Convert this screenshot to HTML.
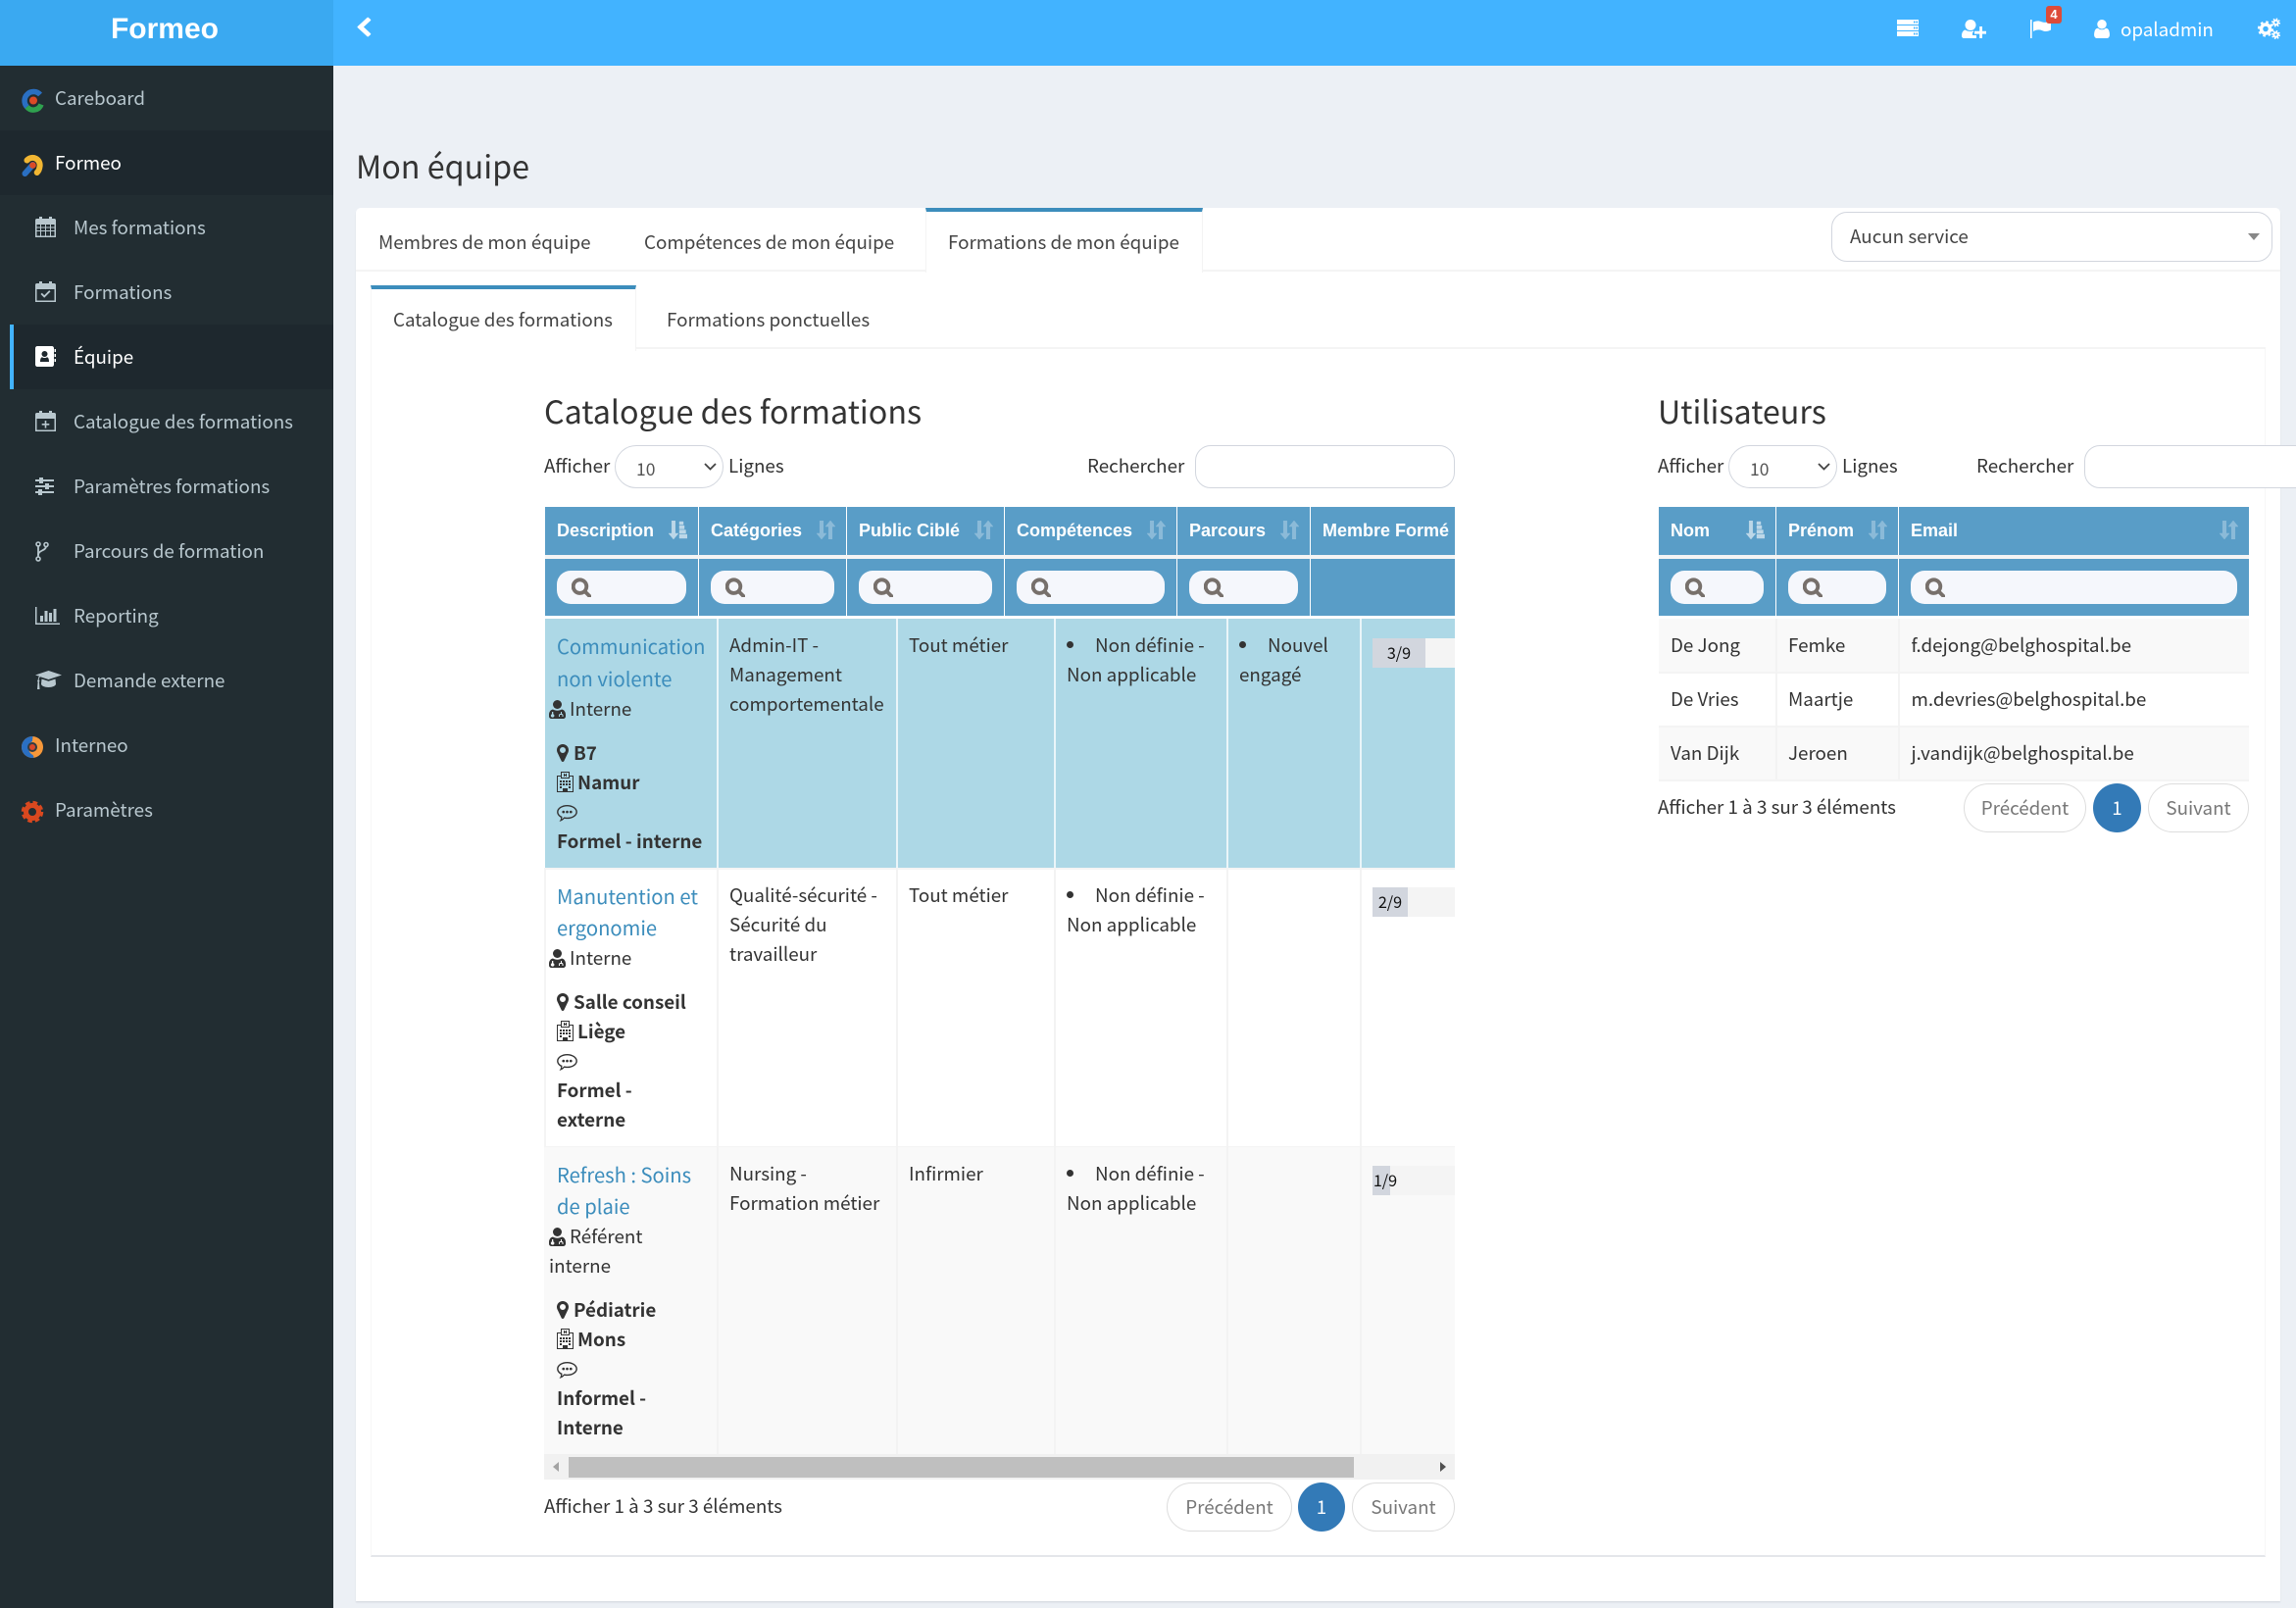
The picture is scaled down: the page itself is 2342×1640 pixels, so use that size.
<!DOCTYPE html>
<html lang="fr"><head><meta charset="utf-8"><title>Mon équipe - Formeo</title>
<style>
*{box-sizing:border-box}
html,body{margin:0;padding:0}
body{width:2342px;height:1640px;overflow:hidden;position:relative;background:#ecf0f5;font-family:"Noto Sans CJK JP","Liberation Sans",sans-serif;font-size:18.8px;color:#333}
.a,.t,svg.i{position:absolute}
.t{white-space:nowrap;line-height:30px;height:30px}
.b{font-weight:700}
.s{color:#b8c7ce}
.w{color:#fff}
.l{color:#3c8dbc;font-size:20.2px}
.h{font-family:"Liberation Sans",Arial,sans-serif;font-weight:700;font-size:18px;color:#fff}
.ttl{font-size:32.3px;line-height:50px;height:50px}
.th{position:absolute;background:#599dc7}
.in{position:absolute;height:34px;top:582px;background:#f5f7fc;border-radius:14px}
.bx{position:absolute;background:#fff;border:1.5px solid #d2d6de;border-radius:16px}
.pg{position:absolute;border:1.5px solid #ddd;border-radius:25px;background:#fff;color:#777;text-align:center;line-height:47px;height:50px}
.pc{position:absolute;background:#337ab7;color:#fff;border-radius:50%;text-align:center;height:50px;line-height:50px}
.vl{position:absolute;width:1.5px}
svg.i{fill:currentColor;overflow:visible}
.g{color:#77706b;stroke:currentColor;stroke-width:70}
.so{color:#fff;opacity:.3;stroke:currentColor;stroke-width:.5}
.so1{color:#fff;opacity:.6;stroke:currentColor;stroke-width:.4}
.pb{position:absolute;left:1400px;width:84px;height:30px;background:#f4f4f4}
.pf{position:absolute;left:0;top:0;height:30px;background:#d2d6de}
.pt{position:absolute;left:0;top:-1px;width:54px;text-align:center;font-size:16.2px;line-height:30px;color:#111}
</style></head><body>
<svg width="0" height="0" style="position:absolute">
<symbol id="search" viewBox="60 60 1670 1690"><path d="M1216 832q0-185-131.5-316.5t-316.5-131.5-316.5 131.5-131.5 316.5 131.5 316.5 316.5 131.5 316.5-131.5 131.5-316.5zm512 832q0 52-38 90t-90 38q-54 0-90-38l-343-342q-179 124-399 124-143 0-273.5-55.5t-225-150-150-225-55.5-273.5 55.5-273.5 150-225 225-150 273.5-55.5 273.5 55.5 225 150 150 225 55.5 273.5q0 220-124 399l343 343q37 37 37 90z"/></symbol>
<symbol id="marker" viewBox="384 128 1024 1536"><path d="M1152 640q0-106-75-181t-181-75-181 75-75 181 75 181 181 75 181-75 75-181zm256 0q0 109-33 179l-364 774q-16 33-47.5 52t-67.5 19-67.5-19-46.5-52l-365-774q-33-70-33-179 0-212 150-362t362-150 362 150 150 362z"/></symbol>
<symbol id="user" viewBox="256 128 1280 1536"><path d="M1536 1399q0 109-62.5 187t-150.5 78h-854q-88 0-150.5-78t-62.5-187q0-85 8.5-160.5t31.5-152 58.5-131 94-89 134.5-34.5q131 128 313 128t313-128q76 0 134.5 34.5t94 89 58.5 131 31.5 152 8.5 160.5zm-256-887q0 159-112.5 271.5t-271.5 112.5-271.5-112.5-112.5-271.5 112.5-271.5 271.5-112.5 271.5 112.5 112.5 271.5z"/></symbol>
<symbol id="hosp" viewBox="0 0 17 21"><path fill-rule="evenodd" d="M4 0h9v4h4v17H0V4h4zM5 1v5h7V1zM7 2v3h1V4h1v1h1V2H9v1H8V2zM1 5v15h5v-3h5v3h5V5h-3v2H4V5zM3 9h2v2H3zm3 0h2v2H6zm3 0h2v2H9zm3 0h2v2h-2zM3 12h2v2H3zm3 0h2v2H6zm3 0h2v2H9zm3 0h2v2h-2zM3 15h2v2H3zm9 0h2v2h-2z"/></symbol>
<symbol id="chat" viewBox="0 0 22 18"><path fill-rule="evenodd" d="M11 0c6 0 11 3.300 11 7.500S17 15 11 15c-1 0-2-.1-3-.3C6.500 16.500 4.500 17.500 2.500 18c1-1.200 1.700-2.600 1.800-4.400C1.700 12.300 0 10 0 7.500 0 3.300 5 0 11 0zm0 1.500c-5.200 0-9.500 2.700-9.500 6 0 2.100 1.600 4 4.300 5.100-.1 1-.3 1.800-.7 2.600 1.100-.6 2-1.300 2.700-2.100 1 .3 2.100.4 3.200.4 5.200 0 9.500-2.700 9.500-6s-4.300-6-9.500-6z"/><circle cx="7" cy="7.500" r="1.400"/><circle cx="11" cy="7.500" r="1.400"/><circle cx="15" cy="7.500" r="1.400"/></symbol>
<symbol id="md" viewBox="0 0 17 19"><circle cx="8.500" cy="4.500" r="4.500"/><path fill-rule="evenodd" d="M4 9.500c1.200.8 2.900 1.200 4.500 1.200s3.300-.4 4.500-1.200c2.500.5 4 2.500 4 5.500v1.500c0 1.400-1 2.500-2.500 2.500h-12C1 19 0 17.900 0 16.500V15c0-3 1.500-5 4-5.500zM3 12v2.200a1.800 1.800 0 1 0 1.300 0V12zm9 0v2h-.7c-.7 0-1.300.8-1.300 1.800V17h1v-1.200c0-.4.200-.8.500-.8h1.500c.3 0 .5.400.5.800V17h1v-1.200c0-1-.6-1.800-1.300-1.800H13v-2z"/></symbol>
<symbol id="sortu" viewBox="0 0 19 19"><path d="M0 13h3.200V0h3.600v13H10l-5 6zM9 6l5-6 5 6h-3.200v13h-3.600V6z"/></symbol>
<symbol id="sorta" viewBox="0 0 19 19"><path d="M0 13h3.200V0h3.600v13H10l-5 6zM11 1h4v3h-4zm0 4h5v3.500h-5zm0 4.500h6.500V13H11zm0 4.500h8v4h-8z"/></symbol>
</svg>

<!-- sidebar -->
<div class="a" style="left:0;top:0;width:340px;height:1640px;background:#222d32"></div>
<div class="a" style="left:0;top:0;width:340px;height:67px;background:#3aa9f1"></div>
<div class="a" style="left:340px;top:0;width:2002px;height:67px;background:#42b3ff"></div>
<div class="t w" style="left:0;width:336px;text-align:center;top:12px;font:700 30px/36px 'Liberation Sans',Arial,sans-serif;height:36px">Formeo</div>
<div class="a" style="left:0;top:133px;width:340px;height:66px;background:#1e282e"></div>
<div class="a" style="left:10px;top:331px;width:330px;height:66px;background:#1e282e"></div>
<div class="a" style="left:10px;top:331px;width:4px;height:66px;background:#42b3ff"></div>

<div class="t s" style="left:56px;top:85px">Careboard</div>
<div class="t w" style="left:56px;top:151px">Formeo</div>
<div class="t s" style="left:75px;top:217px">Mes formations</div>
<div class="t s" style="left:75px;top:283px">Formations</div>
<div class="t w" style="left:75px;top:349px">Équipe</div>
<div class="t s" style="left:75px;top:415px">Catalogue des formations</div>
<div class="t s" style="left:75px;top:481px">Paramètres formations</div>
<div class="t s" style="left:75px;top:547px">Parcours de formation</div>
<div class="t s" style="left:75px;top:613px">Reporting</div>
<div class="t s" style="left:75px;top:679px">Demande externe</div>
<div class="t s" style="left:56px;top:745px">Interneo</div>
<div class="t s" style="left:56px;top:811px">Paramètres</div>

<!-- Colored logos -->
<svg class="i" style="left:22px;top:91px" width="23" height="23" viewBox="0 0 23 23"><path d="M19 5.500A8.500 8.500 0 1 0 5.500 18" fill="none" stroke="#2a6fc2" stroke-width="5.500"/><path d="M5.500 18A8.500 8.500 0 0 0 20 15.500" fill="none" stroke="#2fa14f" stroke-width="5.500"/><circle cx="12" cy="11.500" r="4" fill="#dc4a26"/></svg>
<svg class="i" style="left:22px;top:157px" width="23" height="23" viewBox="0 0 23 23"><path d="M5.500 6.500A7.500 7.500 0 0 1 18.500 13c-.3 2.500-1.200 4.500-2.800 6" fill="none" stroke="#f2b632" stroke-width="6" stroke-linecap="round"/><path d="M3.500 20L11.500 11" stroke="#2a6fc2" stroke-width="6" stroke-linecap="round"/><circle cx="11.500" cy="11.500" r="3.300" fill="#dc4a26"/></svg>
<svg class="i" style="left:22px;top:751px" width="22" height="22" viewBox="0 0 22 22"><circle cx="11" cy="11" r="11" fill="#f7983a"/><path d="M11 0a11 11 0 0 0 0 22c1.500 0 2-1 .5-3A8 8 0 0 1 11 5c0-2.500 1-5 0-5z" fill="#2a6fc2"/><circle cx="11" cy="11" r="5" fill="#333c42"/><circle cx="11" cy="11" r="3" fill="#d9482a"/></svg>
<svg class="i" style="left:22px;top:817px" width="22" height="22" viewBox="0 0 22 22"><circle cx="11" cy="11" r="6.500" fill="none" stroke="#d9481f" stroke-width="5"/><circle cx="11" cy="11" r="9.500" fill="none" stroke="#d9481f" stroke-width="3.500" stroke-dasharray="4.500 3"/></svg>

<!-- submenu icons -->
<svg class="i s" style="left:36px;top:221px" width="21" height="21" viewBox="0 0 21 21"><path fill-rule="evenodd" d="M1.500 2H4V0h3v2h7V0h3v2h2.500C20.300 2 21 2.700 21 3.500V21H0V3.500C0 2.700.7 2 1.500 2zM1.500 8v2.500h3.500V8zm4.500 0v2.500h4V8zm5 0v2.500h4V8zm5 0v2.500h3.500V8zM1.500 11.500V14h3.500v-2.500zm4.500 0V14h4v-2.500zm5 0V14h4v-2.500zm5 0V14h3.500v-2.500zM1.500 15v4.500h3.500V15zm4.500 0v4.500h4V15zm5 0v4.500h4V15zm5 0v4.500h3.500V15z"/></svg>
<svg class="i s" style="left:36px;top:287px" width="21" height="21" viewBox="0 0 21 21"><path fill-rule="evenodd" d="M1.500 2H4V0h3v2h7V0h3v2h2.500C20.300 2 21 2.700 21 3.500V21H0V3.500C0 2.700.7 2 1.500 2zm0 6v11.500h18V8z"/><path d="M5.500 13l1.300-1.300 2.400 2.400 5-5 1.300 1.300-6.300 6.300z"/></svg>
<svg class="i w" style="left:36px;top:353px" width="21" height="21" viewBox="0 0 21 21"><path fill-rule="evenodd" d="M2 0h15c1 0 2 1 2 2v17c0 1-1 2-2 2H2c-1 0-2-1-2-2V2C0 1 1 0 2 0zm7.500 5a3 3 0 1 0 0 6 3 3 0 0 0 0-6zM5 16h9c0-2.500-.5-4.500-2-4.800-.7.500-1.600.8-2.500.8S7.700 11.700 7 11.200c-1.500.3-2 2.300-2 4.800z"/><path d="M19.500 3H21v3h-1.500zm0 5H21v3h-1.500zm0 5H21v3h-1.500z"/></svg>
<svg class="i s" style="left:36px;top:419px" width="21" height="21" viewBox="0 0 21 21"><path fill-rule="evenodd" d="M1.500 2H4V0h3v2h7V0h3v2h2.500C20.300 2 21 2.700 21 3.500V21H0V3.500C0 2.700.7 2 1.500 2zm0 6v11.500h18V8z"/><path d="M9.700 10h1.600v3h3v1.600h-3v3H9.700v-3h-3V13h3z"/></svg>
<svg class="i s" style="left:36px;top:487px" width="19" height="18" viewBox="0 0 19 18"><path d="M0 2h4V0h4v2h11v2H8v2H4V4H0zM0 8h10V6h4v2h5v2h-5v2h-4v-2H0zM0 14h3v-2h4v2h12v2H7v2H3v-2H0z"/></svg>
<svg class="i s" style="left:36px;top:552px" width="14" height="21" viewBox="0 0 14 21"><path fill="none" stroke="currentColor" stroke-width="1.800" d="M3 4v12"/><path fill="none" stroke="currentColor" stroke-width="1.800" d="M11 5c0 5-8 4-8 9"/><g fill="none" stroke="currentColor" stroke-width="1.600"><circle cx="3" cy="3" r="2"/><circle cx="3" cy="18" r="2"/><circle cx="11" cy="3.500" r="2"/></g></svg>
<svg class="i s" style="left:36px;top:619px" width="25" height="18" viewBox="0 0 25 18"><path d="M0 0h1.500v16.500H25V18H0zM5 9h3v6H5zm4.500-5h3v11h-3zM14 6h3v9h-3zm4.500-4h3v13h-3z"/></svg>
<svg class="i s" style="left:36px;top:684px" width="27" height="20" viewBox="0 0 27 20"><path d="M13.500 0L27 4.500l-13.500 4.500L5 6.300C4 7 3.700 8 3.700 9.500c.5.200.7.600.7 1 0 .4-.2.700-.5.900L4.500 19H2l.6-7.600c-.3-.2-.5-.5-.5-.9s.3-.8.700-1c0-1.500.3-3 1.300-3.800L0 4.500z"/><path d="M6.500 8.500l7 2.300 7-2.300.5 5c0 2-3.500 3.500-7.500 3.500S6 15.500 6 13.500z"/></svg>

<!-- topbar -->
<svg class="i w" style="left:363px;top:18px" width="16" height="20" viewBox="300 60 1200 1620" preserveAspectRatio="none"><path d="M1427 301l-531 531 531 531q19 19 19 45t-19 45l-166 166q-19 19-45 19t-45-19l-742-742q-19-19-19-45t19-45l742-742q19-19 45-19t45 19l166 166q19 19 19 45t-19 45z"/></svg>
<svg class="i w" style="left:1935px;top:20px" width="22" height="17" viewBox="0 0 22 17"><path fill-rule="evenodd" d="M0 0h22v5H0zm17 1.500v2h1.500v-2zm2.500 0v2H21v-2zM0 6h22v5H0zm17 1.500v2h1.500v-2zm2.500 0v2H21v-2zM0 12h22v5H0zm17 1.500v2h1.500v-2zm2.500 0v2H21v-2z"/></svg>
<svg class="i w" style="left:2001px;top:20px" width="25" height="19" viewBox="0 0 25 19"><circle cx="9" cy="5.500" r="5.500"/><path d="M3.500 10.500C5 11.500 7 12 9 12c1 0 2-.1 3-.4V13h-1v3h4v3H2.500C1 19 0 18 0 16.500c0-3 1.200-5.500 3.500-6z"/><path d="M18.200 7h2.800v4.800h4v2.800h-4V19h-2.800v-4.400H13v-2.800h5.200z"/></svg>
<svg class="i w" style="left:2071px;top:20px" width="21" height="19" viewBox="0 0 21 19"><path d="M0 0h1.600v19H0z"/><path d="M3 2.500c2.500-1 4.500-1.300 6-1 2.500.6 4.500 1.800 7 1.200l5-1.500v9.300c-2 1-4 1.700-6 1.500-2.500-.3-3.500-1.400-6-1.600-2-.1-4 .5-6 1.600z"/></svg>
<div class="a" style="left:2087px;top:6px;width:16px;height:18px;background:#dd4b39;border-radius:3px;color:#fff;font:700 13px/18px 'Liberation Sans',sans-serif;text-align:center">4</div>
<svg class="i w" style="left:2136px;top:20px" width="16" height="19"><use href="#user"/></svg>
<div class="t w" style="left:2163px;top:15px">opaladmin</div>
<svg class="i w" style="left:2303px;top:19px" width="23" height="21" viewBox="0 0 23 21"><circle cx="8" cy="10.500" r="4.500" fill="none" stroke="currentColor" stroke-width="3.500"/><circle cx="8" cy="10.500" r="7" fill="none" stroke="currentColor" stroke-width="2.200" stroke-dasharray="2.600 2.900"/><circle cx="18.500" cy="4" r="2.200" fill="none" stroke="currentColor" stroke-width="2"/><circle cx="18.500" cy="4" r="3.800" fill="none" stroke="currentColor" stroke-width="1.500" stroke-dasharray="1.500 1.500"/><circle cx="18.500" cy="16.500" r="2.200" fill="none" stroke="currentColor" stroke-width="2"/><circle cx="18.500" cy="16.500" r="3.800" fill="none" stroke="currentColor" stroke-width="1.500" stroke-dasharray="1.500 1.500"/></svg>

<div class="t ttl" style="left:363px;top:144px;color:#333">Mon équipe</div>

<!-- card -->
<div class="a" style="left:363px;top:212px;width:1963px;height:1421px;background:#fff;border-radius:5px 5px 0 0;box-shadow:0 1.500px 1.500px #d8dce3"></div>
<div class="a" style="left:363px;top:275px;width:1963px;height:1.500px;background:#f4f4f4"></div>
<div class="a" style="left:944px;top:212px;width:283px;height:66px;background:#fff;border-right:1.500px solid #f4f4f4;border-left:1.500px solid #f4f4f4;border-top:4px solid #3c8dbc"></div>
<div class="t" style="left:386px;top:232px;color:#444">Membres de mon équipe</div>
<div class="t" style="left:657px;top:232px;color:#444">Compétences de mon équipe</div>
<div class="t" style="left:967px;top:232px;color:#444">Formations de mon équipe</div>
<div class="bx" style="left:1868px;top:216px;width:450px;height:51px"></div>
<div class="t" style="left:1887px;top:226px;color:#444">Aucun service</div>
<div class="a" style="left:2293px;top:238px;width:0;height:0;border-left:6px solid transparent;border-right:6px solid transparent;border-top:7px solid #888"></div>

<!-- inner panel -->
<div class="a" style="left:378px;top:354px;width:1933px;height:1234px;background:#fff;border-left:1px solid #f7f7f7;border-right:1px solid #f7f7f7;border-bottom:2px solid #e4e6ea"></div>
<div class="a" style="left:378px;top:354px;width:1933px;height:1.500px;background:#f4f4f4"></div>
<div class="a" style="left:378px;top:291px;width:271px;height:67px;background:#fff;border-right:1.500px solid #f4f4f4;border-left:1px solid #f7f7f7;border-top:4px solid #3c8dbc"></div>
<div class="t" style="left:401px;top:311px;color:#444">Catalogue des formations</div>
<div class="t" style="left:680px;top:311px;color:#444">Formations ponctuelles</div>

<!-- Catalogue table -->
<div class="t ttl" style="left:555px;top:394px">Catalogue des formations</div>
<div class="t" style="left:555px;top:460px">Afficher</div>
<div class="bx" style="left:627px;top:454px;width:111px;height:44px;border-radius:22px"></div>
<div class="t" style="left:649px;top:464px;font-size:17.5px;color:#555">10</div>
<svg class="i" style="left:718px;top:472px" width="13" height="8" viewBox="0 0 13 8"><path d="M1 1l5.500 5.500L12 1" fill="none" stroke="#444" stroke-width="1.800"/></svg>
<div class="t" style="left:743px;top:460px">Lignes</div>
<div class="t" style="left:1109px;top:460px">Rechercher</div>
<div class="bx" style="left:1219px;top:454px;width:265px;height:44px"></div>

<div class="a" style="left:556px;top:566px;width:928px;height:4px;background:#f4f4f4"></div>
<div class="th" style="left:556px;top:517px;width:156px;height:49px"></div>
<div class="th" style="left:713px;top:517px;width:150px;height:49px"></div>
<div class="th" style="left:864px;top:517px;width:160px;height:49px"></div>
<div class="th" style="left:1025px;top:517px;width:175px;height:49px"></div>
<div class="th" style="left:1201px;top:517px;width:135px;height:49px"></div>
<div class="th" style="left:1337px;top:517px;width:147px;height:49px"></div>
<div class="th" style="left:556px;top:570px;width:156px;height:58px"></div>
<div class="th" style="left:713px;top:570px;width:150px;height:58px"></div>
<div class="th" style="left:864px;top:570px;width:160px;height:58px"></div>
<div class="th" style="left:1025px;top:570px;width:175px;height:58px"></div>
<div class="th" style="left:1201px;top:570px;width:135px;height:58px"></div>
<div class="th" style="left:1337px;top:570px;width:147px;height:58px"></div>

<div class="t h" style="left:568px;top:526px">Description</div>
<div class="t h" style="left:725px;top:526px">Catégories</div>
<div class="t h" style="left:876px;top:526px">Public Ciblé</div>
<div class="t h" style="left:1037px;top:526px">Compétences</div>
<div class="t h" style="left:1213px;top:526px">Parcours</div>
<div class="t h" style="left:1349px;top:526px">Membre Formé</div>
<svg class="i so1" style="left:682px;top:531px" width="19" height="19"><use href="#sorta"/></svg>
<svg class="i so" style="left:833px;top:531px" width="19" height="19"><use href="#sortu"/></svg>
<svg class="i so" style="left:994px;top:531px" width="19" height="19"><use href="#sortu"/></svg>
<svg class="i so" style="left:1170px;top:531px" width="19" height="19"><use href="#sortu"/></svg>
<svg class="i so" style="left:1306px;top:531px" width="19" height="19"><use href="#sortu"/></svg>

<div class="in" style="left:568px;width:132px"></div>
<div class="in" style="left:725px;width:126px"></div>
<div class="in" style="left:876px;width:136px"></div>
<div class="in" style="left:1037px;width:151px"></div>
<div class="in" style="left:1213px;width:111px"></div>
<svg class="i g" style="left:583px;top:589px" width="20" height="20"><use href="#search"/></svg>
<svg class="i g" style="left:740px;top:589px" width="20" height="20"><use href="#search"/></svg>
<svg class="i g" style="left:891px;top:589px" width="20" height="20"><use href="#search"/></svg>
<svg class="i g" style="left:1052px;top:589px" width="20" height="20"><use href="#search"/></svg>
<svg class="i g" style="left:1228px;top:589px" width="20" height="20"><use href="#search"/></svg>

<!-- rows bg -->
<div class="a" style="left:556px;top:631px;width:928px;height:254px;background:#add8e6"></div>
<div class="a" style="left:556px;top:885px;width:928px;height:1.500px;background:#f4f4f4"></div>
<div class="a" style="left:555px;top:1169px;width:929px;height:314px;background:#f9f9f9;border-top:1.500px solid #f4f4f4"></div>
<div class="vl" style="left:731px;top:631px;height:254px;background:#eaf5f9"></div>
<div class="vl" style="left:914px;top:631px;height:254px;background:#eaf5f9"></div>
<div class="vl" style="left:1075px;top:631px;height:254px;background:#eaf5f9"></div>
<div class="vl" style="left:1251px;top:631px;height:254px;background:#eaf5f9"></div>
<div class="vl" style="left:1387px;top:631px;height:254px;background:#eaf5f9"></div>
<div class="vl" style="left:731px;top:885px;height:598px;background:#f3f3f3"></div>
<div class="vl" style="left:914px;top:885px;height:598px;background:#f3f3f3"></div>
<div class="vl" style="left:1075px;top:885px;height:598px;background:#f3f3f3"></div>
<div class="vl" style="left:1251px;top:885px;height:598px;background:#f3f3f3"></div>
<div class="vl" style="left:1387px;top:885px;height:598px;background:#f3f3f3"></div>
<div class="vl" style="left:555px;top:885px;height:284px;background:#f4f4f4"></div>

<!-- row 1 -->
<div class="t l" style="left:568px;top:644px">Communication</div>
<div class="t l" style="left:568px;top:677px">non violente</div>
<svg class="i" style="left:560px;top:714px" width="17" height="19"><use href="#md"/></svg>
<div class="t" style="left:581px;top:708px">Interne</div>
<svg class="i" style="left:568px;top:759px" width="12" height="18"><use href="#marker"/></svg>
<div class="t b" style="left:585px;top:753px">B7</div>
<svg class="i" style="left:568px;top:787px" width="17" height="21"><use href="#hosp"/></svg>
<div class="t b" style="left:589px;top:783px">Namur</div>
<svg class="i" style="left:568px;top:821px" width="21" height="17"><use href="#chat"/></svg>
<div class="t b" style="left:568px;top:843px">Formel - interne</div>
<div class="t" style="left:744px;top:643px">Admin-IT -</div>
<div class="t" style="left:744px;top:673px">Management</div>
<div class="t" style="left:744px;top:703px">comportementale</div>
<div class="t" style="left:927px;top:643px">Tout métier</div>
<div class="a" style="left:1088px;top:654px;width:7px;height:7px;border-radius:50%;background:#333"></div>
<div class="t" style="left:1117px;top:643px">Non définie -</div>
<div class="t" style="left:1088px;top:673px">Non applicable</div>
<div class="a" style="left:1264px;top:654px;width:7px;height:7px;border-radius:50%;background:#333"></div>
<div class="t" style="left:1293px;top:643px">Nouvel</div>
<div class="t" style="left:1264px;top:673px">engagé</div>
<div class="pb" style="top:651px"><div class="pf" style="width:54px"></div><div class="pt">3/9</div></div>

<!-- row 2 -->
<div class="t l" style="left:568px;top:899px">Manutention et</div>
<div class="t l" style="left:568px;top:931px">ergonomie</div>
<svg class="i" style="left:560px;top:968px" width="17" height="19"><use href="#md"/></svg>
<div class="t" style="left:581px;top:962px">Interne</div>
<svg class="i" style="left:568px;top:1013px" width="12" height="18"><use href="#marker"/></svg>
<div class="t b" style="left:585px;top:1007px">Salle conseil</div>
<svg class="i" style="left:568px;top:1041px" width="17" height="21"><use href="#hosp"/></svg>
<div class="t b" style="left:589px;top:1037px">Liège</div>
<svg class="i" style="left:568px;top:1075px" width="21" height="17"><use href="#chat"/></svg>
<div class="t b" style="left:568px;top:1097px">Formel -</div>
<div class="t b" style="left:568px;top:1127px">externe</div>
<div class="t" style="left:744px;top:898px">Qualité-sécurité -</div>
<div class="t" style="left:744px;top:928px">Sécurité du</div>
<div class="t" style="left:744px;top:958px">travailleur</div>
<div class="t" style="left:927px;top:898px">Tout métier</div>
<div class="a" style="left:1088px;top:909px;width:7px;height:7px;border-radius:50%;background:#333"></div>
<div class="t" style="left:1117px;top:898px">Non définie -</div>
<div class="t" style="left:1088px;top:928px">Non applicable</div>
<div class="pb" style="top:905px"><div class="pf" style="width:36px"></div><div class="pt" style="width:36px">2/9</div></div>

<!-- row 3 -->
<div class="t l" style="left:568px;top:1183px">Refresh : Soins</div>
<div class="t l" style="left:568px;top:1215px">de plaie</div>
<svg class="i" style="left:560px;top:1252px" width="17" height="19"><use href="#md"/></svg>
<div class="t" style="left:581px;top:1246px">Référent</div>
<div class="t" style="left:560px;top:1276px">interne</div>
<svg class="i" style="left:568px;top:1327px" width="12" height="18"><use href="#marker"/></svg>
<div class="t b" style="left:585px;top:1321px">Pédiatrie</div>
<svg class="i" style="left:568px;top:1355px" width="17" height="21"><use href="#hosp"/></svg>
<div class="t b" style="left:589px;top:1351px">Mons</div>
<svg class="i" style="left:568px;top:1389px" width="21" height="17"><use href="#chat"/></svg>
<div class="t b" style="left:568px;top:1411px">Informel -</div>
<div class="t b" style="left:568px;top:1441px">Interne</div>
<div class="t" style="left:744px;top:1182px">Nursing -</div>
<div class="t" style="left:744px;top:1212px">Formation métier</div>
<div class="t" style="left:927px;top:1182px">Infirmier</div>
<div class="a" style="left:1088px;top:1193px;width:7px;height:7px;border-radius:50%;background:#333"></div>
<div class="t" style="left:1117px;top:1182px">Non définie -</div>
<div class="t" style="left:1088px;top:1212px">Non applicable</div>
<div class="pb" style="top:1189px"><div class="pf" style="width:18px"></div><div class="pt" style="width:26px">1/9</div></div>

<!-- scrollbar -->
<div class="a" style="left:555px;top:1483px;width:929px;height:26px;background:#f1f1f1"></div>
<div class="a" style="left:580px;top:1486px;width:801px;height:21px;background:#bfbfbf"></div>
<div class="a" style="left:564px;top:1491px;width:0;height:0;border-top:5.500px solid transparent;border-bottom:5.500px solid transparent;border-right:6px solid #a3a3a3"></div>
<div class="a" style="left:1469px;top:1491px;width:0;height:0;border-top:5.500px solid transparent;border-bottom:5.500px solid transparent;border-left:6px solid #505050"></div>

<div class="t" style="left:555px;top:1521px">Afficher 1 à 3 sur 3 éléments</div>
<div class="pg" style="left:1190px;top:1512px;width:128px">Précédent</div>
<div class="pc" style="left:1324px;top:1512px;width:48px">1</div>
<div class="pg" style="left:1379px;top:1512px;width:105px">Suivant</div>

<!-- Utilisateurs -->
<div class="t ttl" style="left:1691px;top:394px">Utilisateurs</div>
<div class="t" style="left:1691px;top:460px">Afficher</div>
<div class="bx" style="left:1763px;top:454px;width:111px;height:44px;border-radius:22px"></div>
<div class="t" style="left:1785px;top:464px;font-size:17.5px;color:#555">10</div>
<svg class="i" style="left:1854px;top:472px" width="13" height="8" viewBox="0 0 13 8"><path d="M1 1l5.500 5.500L12 1" fill="none" stroke="#444" stroke-width="1.800"/></svg>
<div class="t" style="left:1879px;top:460px">Lignes</div>
<div class="t" style="left:2016px;top:460px">Rechercher</div>
<div class="bx" style="left:2126px;top:454px;width:260px;height:44px"></div>

<div class="a" style="left:1692px;top:566px;width:602px;height:4px;background:#f4f4f4"></div>
<div class="th" style="left:1692px;top:517px;width:119px;height:49px"></div>
<div class="th" style="left:1812px;top:517px;width:124px;height:49px"></div>
<div class="th" style="left:1937px;top:517px;width:357px;height:49px"></div>
<div class="th" style="left:1692px;top:570px;width:119px;height:58px"></div>
<div class="th" style="left:1812px;top:570px;width:124px;height:58px"></div>
<div class="th" style="left:1937px;top:570px;width:357px;height:58px"></div>
<div class="t h" style="left:1704px;top:526px">Nom</div>
<div class="t h" style="left:1824px;top:526px">Prénom</div>
<div class="t h" style="left:1949px;top:526px">Email</div>
<svg class="i so1" style="left:1781px;top:531px" width="19" height="19"><use href="#sorta"/></svg>
<svg class="i so" style="left:1906px;top:531px" width="19" height="19"><use href="#sortu"/></svg>
<svg class="i so" style="left:2264px;top:531px" width="19" height="19"><use href="#sortu"/></svg>
<div class="in" style="left:1704px;width:95px"></div>
<div class="in" style="left:1824px;width:100px"></div>
<div class="in" style="left:1949px;width:333px"></div>
<svg class="i g" style="left:1719px;top:589px" width="20" height="20"><use href="#search"/></svg>
<svg class="i g" style="left:1839px;top:589px" width="20" height="20"><use href="#search"/></svg>
<svg class="i g" style="left:1964px;top:589px" width="20" height="20"><use href="#search"/></svg>

<div class="a" style="left:1692px;top:631px;width:602px;height:54px;background:#f9f9f9"></div>
<div class="a" style="left:1692px;top:741px;width:602px;height:54px;background:#f9f9f9"></div>
<div class="a" style="left:1692px;top:685px;width:602px;height:1.500px;background:#f4f4f4"></div>
<div class="a" style="left:1692px;top:740px;width:602px;height:1.500px;background:#f4f4f4"></div>
<div class="a" style="left:1692px;top:795px;width:602px;height:1.500px;background:#f4f4f4"></div>
<div class="vl" style="left:1811px;top:631px;height:164px;background:#f3f3f3"></div>
<div class="vl" style="left:1936px;top:631px;height:164px;background:#f3f3f3"></div>
<div class="t" style="left:1704px;top:643px">De Jong</div>
<div class="t" style="left:1824px;top:643px">Femke</div>
<div class="t" style="left:1949.5px;top:643px">f.dejong@belghospital.be</div>
<div class="t" style="left:1704px;top:698px">De Vries</div>
<div class="t" style="left:1824px;top:698px">Maartje</div>
<div class="t" style="left:1949.5px;top:698px">m.devries@belghospital.be</div>
<div class="t" style="left:1704px;top:753px">Van Dijk</div>
<div class="t" style="left:1824px;top:753px">Jeroen</div>
<div class="t" style="left:1949.5px;top:753px">j.vandijk@belghospital.be</div>
<div class="t" style="left:1691px;top:808px">Afficher 1 à 3 sur 3 éléments</div>
<div class="pg" style="left:2003px;top:799px;width:125px">Précédent</div>
<div class="pc" style="left:2135px;top:799px;width:49px">1</div>
<div class="pg" style="left:2191px;top:799px;width:103px">Suivant</div>
</body></html>
